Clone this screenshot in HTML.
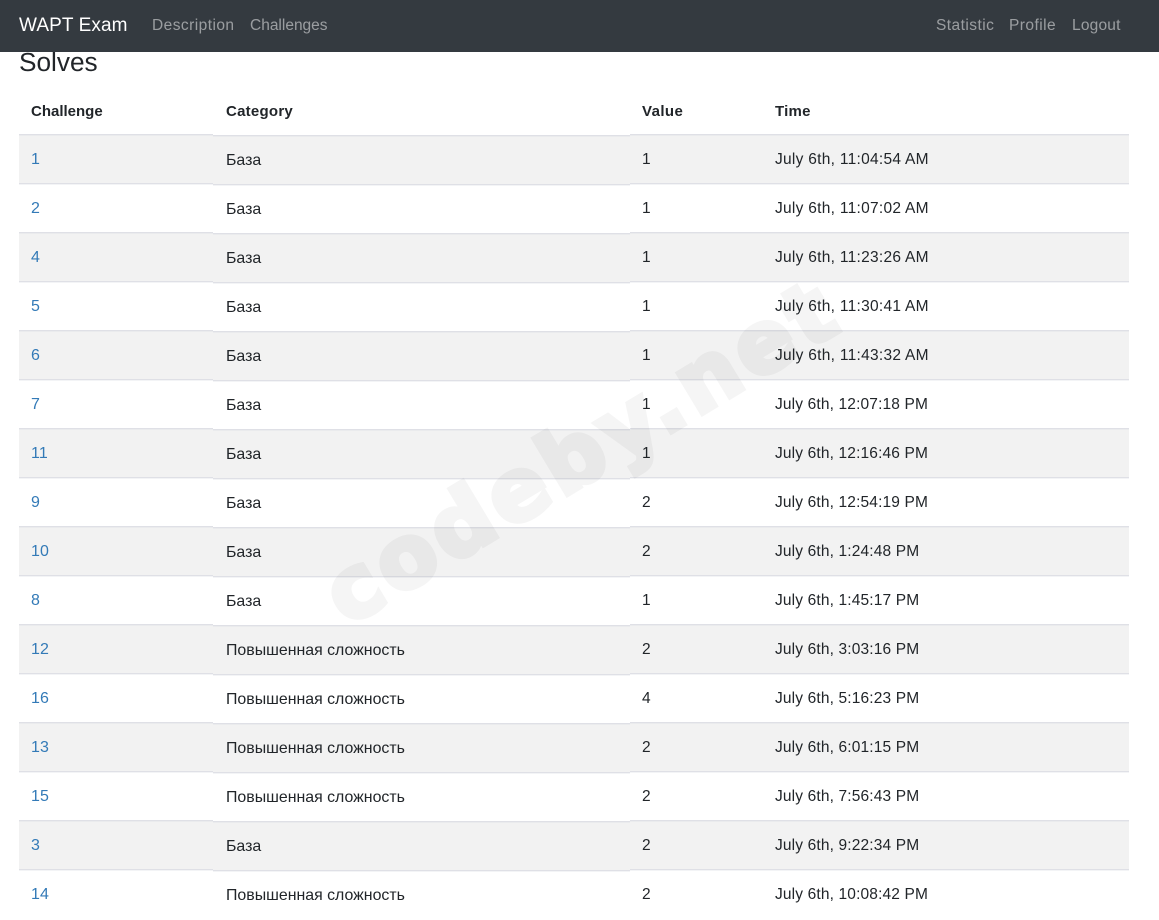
<!DOCTYPE html>
<html lang="en"><head><meta charset="utf-8"><title>Solves</title>
<style>
html,body{margin:0;padding:0;background:#fff}
body{width:1159px;height:915px;position:relative;overflow:hidden;font-family:"Liberation Sans",sans-serif;font-size:15.5px;color:#212529}
.nav{position:absolute;left:0;top:0;width:1159px;height:52px;background:#343a40;z-index:3}
.nav span{position:absolute;top:0;line-height:51px;color:rgba(255,255,255,.5);font-size:15.5px;white-space:nowrap}
.nav .b{color:#fff;font-size:19px;left:19px;letter-spacing:.1px}
h1{position:absolute;left:19px;top:44px;margin:0;font-weight:400;font-size:26.2px;line-height:36px}
.h{position:absolute;top:91px;font-weight:700;font-size:15px;line-height:41px}
.r{position:absolute;left:0;width:1159px;height:49px}
.r i{position:absolute;height:48px;border-top:1px solid #dfe0e6;box-shadow:inset 0 1px 0 rgba(222,224,230,.35);font-style:normal;line-height:49px;white-space:nowrap;letter-spacing:.15px}
.c1{left:19px;width:182px;padding-left:12px;top:0}
.r .c2{left:213px;width:404px;padding-left:13px;top:1px;font-size:15.9px;letter-spacing:0}
.c3{left:630px;width:132px;padding-left:12px;top:0}
.c4{left:774px;width:354px;padding-left:1px;top:0}
.r .am{letter-spacing:.28px}
.g i{background:#f2f2f2}
a{color:#337ab7;text-decoration:none;font-size:16px}
.wm{position:absolute;left:582px;top:452px;width:0;height:0;z-index:2;pointer-events:none;mix-blend-mode:multiply}
.wm b{position:absolute;left:-340px;top:-60px;width:680px;text-align:center;font:700 86px/120px "DejaVu Sans",sans-serif;letter-spacing:5px;color:#f5f5f5;-webkit-text-stroke:5px #f5f5f5;transform:rotate(-31deg);white-space:nowrap}
</style></head><body>
<div class="nav"><span class="b">WAPT Exam</span><span style="left:152px;letter-spacing:.45px">Description</span><span style="left:250px">Challenges</span><span style="left:936px;letter-spacing:.45px">Statistic</span><span style="left:1009px;letter-spacing:.45px">Profile</span><span style="left:1072px;letter-spacing:.2px">Logout</span></div>
<h1>Solves</h1>
<div class="h" style="left:31px">Challenge</div><div class="h" style="left:226px;letter-spacing:.25px">Category</div><div class="h" style="left:642px;letter-spacing:.4px">Value</div><div class="h" style="left:775px;letter-spacing:.25px">Time</div>
<div class="r g" style="top:134px"><i class="c1"><a>1</a></i><i class="c2">База</i><i class="c3">1</i><i class="c4 am">July 6th, 11:04:54 AM</i></div>
<div class="r" style="top:183px"><i class="c1"><a>2</a></i><i class="c2">База</i><i class="c3">1</i><i class="c4 am">July 6th, 11:07:02 AM</i></div>
<div class="r g" style="top:232px"><i class="c1"><a>4</a></i><i class="c2">База</i><i class="c3">1</i><i class="c4 am">July 6th, 11:23:26 AM</i></div>
<div class="r" style="top:281px"><i class="c1"><a>5</a></i><i class="c2">База</i><i class="c3">1</i><i class="c4 am">July 6th, 11:30:41 AM</i></div>
<div class="r g" style="top:330px"><i class="c1"><a>6</a></i><i class="c2">База</i><i class="c3">1</i><i class="c4 am">July 6th, 11:43:32 AM</i></div>
<div class="r" style="top:379px"><i class="c1"><a>7</a></i><i class="c2">База</i><i class="c3">1</i><i class="c4">July 6th, 12:07:18 PM</i></div>
<div class="r g" style="top:428px"><i class="c1"><a>11</a></i><i class="c2">База</i><i class="c3">1</i><i class="c4">July 6th, 12:16:46 PM</i></div>
<div class="r" style="top:477px"><i class="c1"><a>9</a></i><i class="c2">База</i><i class="c3">2</i><i class="c4">July 6th, 12:54:19 PM</i></div>
<div class="r g" style="top:526px"><i class="c1"><a>10</a></i><i class="c2">База</i><i class="c3">2</i><i class="c4">July 6th, 1:24:48 PM</i></div>
<div class="r" style="top:575px"><i class="c1"><a>8</a></i><i class="c2">База</i><i class="c3">1</i><i class="c4">July 6th, 1:45:17 PM</i></div>
<div class="r g" style="top:624px"><i class="c1"><a>12</a></i><i class="c2">Повышенная сложность</i><i class="c3">2</i><i class="c4">July 6th, 3:03:16 PM</i></div>
<div class="r" style="top:673px"><i class="c1"><a>16</a></i><i class="c2">Повышенная сложность</i><i class="c3">4</i><i class="c4">July 6th, 5:16:23 PM</i></div>
<div class="r g" style="top:722px"><i class="c1"><a>13</a></i><i class="c2">Повышенная сложность</i><i class="c3">2</i><i class="c4">July 6th, 6:01:15 PM</i></div>
<div class="r" style="top:771px"><i class="c1"><a>15</a></i><i class="c2">Повышенная сложность</i><i class="c3">2</i><i class="c4">July 6th, 7:56:43 PM</i></div>
<div class="r g" style="top:820px"><i class="c1"><a>3</a></i><i class="c2">База</i><i class="c3">2</i><i class="c4">July 6th, 9:22:34 PM</i></div>
<div class="r" style="top:869px"><i class="c1"><a>14</a></i><i class="c2">Повышенная сложность</i><i class="c3">2</i><i class="c4">July 6th, 10:08:42 PM</i></div>
<div class="wm"><b>codeby.net</b></div>
</body></html>
